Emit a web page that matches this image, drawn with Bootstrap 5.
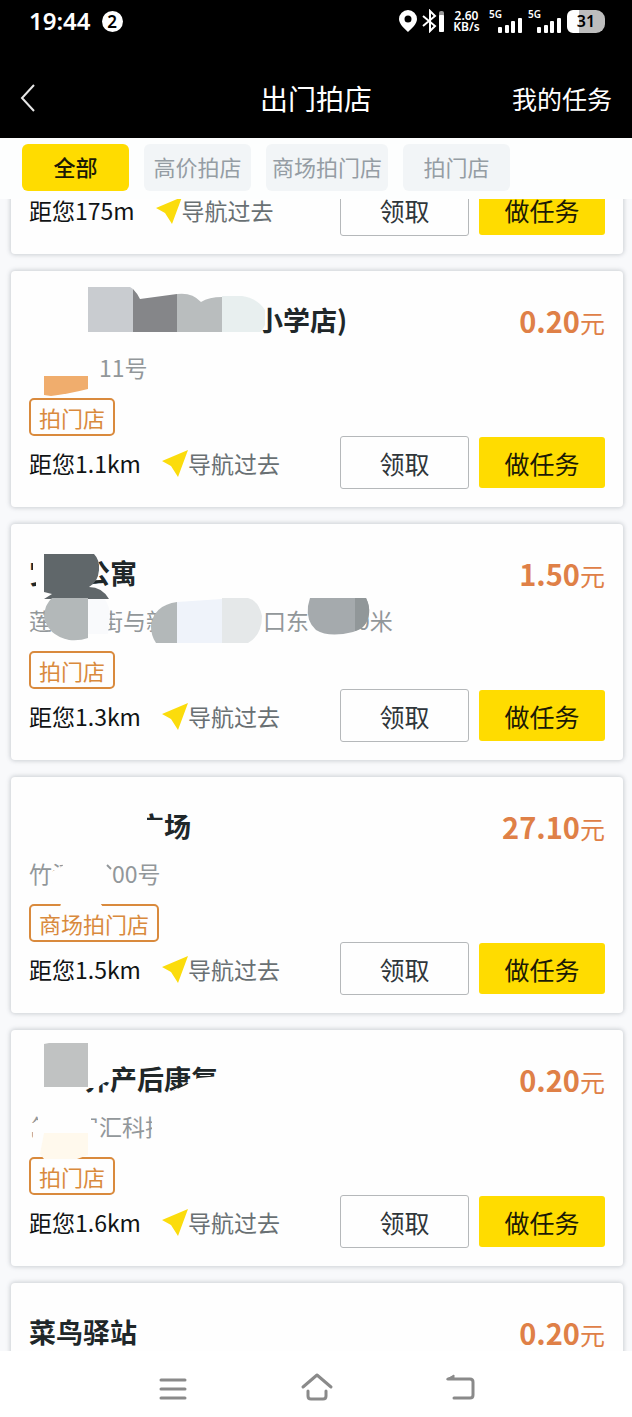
<!DOCTYPE html>
<html lang="zh-CN">
<head>
<meta charset="utf-8">
<meta name="viewport" content="width=device-width, initial-scale=1">
<title>出门拍店</title>
<link href="https://cdn.jsdelivr.net/npm/bootstrap@5.3.0/dist/css/bootstrap.min.css" rel="stylesheet">
<style>
  :root { --sun: #ffdc00; --clay: #df8047; --tag: #d98a3d; }
  body { font-family: "Noto Sans CJK SC", sans-serif; background: #fdfefe; color: #101314; }
  .status { height: 44px; padding: 0 27px 2px 29px; font-family: "Noto Sans", "Noto Sans CJK SC", sans-serif; font-weight: 600; }
  .clock { font-size: 24px; line-height: 32px; }
  .count { width: 21px; height: 21px; font-size: 17px; line-height: 21px; margin-left: 11px; }
  .speed { font-size: 12px; line-height: 11px; margin: 0 8px; width: 29px; }
  .signal { font-size: 10px; line-height: 10px; width: 33px; height: 24px; margin-right: 6px; }
  .battery { width: 38px; height: 23px; font-size: 16px; line-height: 23px; border-radius: 6px 9px 9px 6px; background: linear-gradient(90deg, #fff 31%, #bdbdbd 31%); }
  .titlebar { display: grid; grid-template-columns: 1fr auto 1fr; padding: 33px 20px 19px; line-height: 42px; }
  .titlebar h1 { font-size: 28px; line-height: 42px; font-weight: 400; }
  .titlebar a { font-size: 25px; }
  .tabs { padding: 6px 22px 8px; gap: 15px; }
  .tab { min-width: 107px; height: 47px; padding: 0 6px 3px; border: 0; border-radius: 6px; font-size: 22px; line-height: 42px; background: #f2f5f7; color: #959da4; }
  .tab.on { background: var(--sun); color: #1c1a05; font-weight: 500; }
  .feed { background: #f8f9fb; padding: 0 9px 0 11px; min-height: 0; }
  .job { border: 0; border-radius: 4px; background: #fefefe; box-shadow: 0 0 4px 1px rgba(90,100,110,.28); padding: 32px 18px 18px; margin-bottom: 17px; }
  .job.cut { margin-top: -48px; }
  .head { height: 34px; }
  .shop { font-size: 27px; line-height: 34px; font-weight: 700; color: #202729; }
  .price { font-size: 29px; line-height: 34px; font-weight: 700; color: var(--clay); }
  .price small { font-size: 25px; font-weight: 400; }
  .addr { font-size: 23px; line-height: 32px; height: 32px; margin: 14px 0 15px; color: #92979a; }
  .kind { font-size: 22px; line-height: 34px; height: 38px; padding: 0 8px; border: 2px solid var(--tag); border-radius: 5px; color: var(--tag); }
  .far { font-size: 23px; line-height: 24px; }
  .go { font-size: 23px; line-height: 24px; color: #697073; margin-left: 21px; }
  .act { font-size: 25px; line-height: 24px; border-radius: 3px; padding: 0; }
  .take { width: 129px; height: 53px; border: 1px solid #b5b8ba; background: #fefefe; color: #30363a; margin-right: 10px; }
  .do { width: 126px; height: 51px; border: 0; background: var(--sun); color: #1c1a05; }
  .gap-1c { width: 24px; } .gap-2c { width: 48px; } .gap-4c { width: 94px; } .gap-no { width: 37px; } .gap-yard { width: 70px; }
  .gap-1t { width: 27px; } .gap-2t { width: 54px; } .gap-4t { width: 108px; } .gap-8t { width: 227px; }
  .blur { pointer-events: none; }
  .keys { height: 66px; padding: 10px 0 0; gap: 102px; background: #fff; }
  .keys button { width: 42px; height: 42px; }
</style>
</head>
<body>
<svg width="0" height="0" class="position-absolute" aria-hidden="true">
  <symbol id="arrow" viewBox="0 0 26 28"><path d="M0 12 26 1 16 28 9 17Z" fill="#fbdc0c"/></symbol>
  <symbol id="bars" viewBox="0 0 25 16"><g fill="#fff"><rect x="1" y="10" width="4" height="6" rx="1"/><rect x="8" y="8" width="4" height="8" rx="1"/><rect x="14" y="4" width="4" height="12" rx="1"/><rect x="21" y="1" width="4" height="15" rx="1"/></g></symbol>
</svg>
<div class="d-flex flex-column vh-100 overflow-hidden">
  <header class="bg-black text-white flex-shrink-0">
    <div class="status d-flex align-items-center">
      <span class="clock">19:44</span>
      <span class="count rounded-circle bg-white text-black text-center">2</span>
      <div class="d-flex align-items-center ms-auto">
        <svg width="46" height="24" viewBox="0 0 46 24" aria-hidden="true"><path fill="#fff" fill-rule="evenodd" d="M10 1a9 9 0 0 1 9 9c0 5-5 9-9 13-4-4-9-8-9-13a9 9 0 0 1 9-9Zm0 5.500a3.500 3.500 0 1 0 0 7 3.500 3.500 0 0 0 0-7Z"/><path d="m25 7 12 10-5 5V2l5 5-12 10" fill="none" stroke="#fff" stroke-width="2"/><rect x="41" y="2" width="5" height="21" rx="2" fill="#999"/><rect x="41" y="6" width="5" height="17" rx="1" fill="#fff"/></svg>
        <span class="speed text-center">2.60 KB/s</span>
        <span class="signal position-relative">5G<svg class="position-absolute bottom-0 end-0" width="25" height="16"><use href="#bars"/></svg></span>
        <span class="signal position-relative">5G<svg class="position-absolute bottom-0 end-0" width="25" height="16"><use href="#bars"/></svg></span>
        <span class="battery text-black text-center">31</span>
      </div>
    </div>
    <nav class="titlebar align-items-center">
      <button class="btn p-0 border-0 text-start lh-1" aria-label="返回"><svg width="16" height="28" viewBox="0 0 16 28" fill="none" stroke="#e6e6e6" stroke-width="2"><path d="M14 1 2 14l12 13"/></svg></button>
      <h1 class="m-0">出门拍店</h1>
      <a href="#" class="text-white text-decoration-none text-end">我的任务</a>
    </nav>
  </header>

  <div class="tabs d-flex flex-shrink-0">
    <button class="tab on">全部</button>
    <button class="tab">高价拍店</button>
    <button class="tab">商场拍门店</button>
    <button class="tab">拍门店</button>
  </div>

  <main class="feed flex-grow-1 overflow-hidden">
    <article class="job cut">
      <div class="d-flex align-items-center">
        <span class="far">距您175m</span>
        <a href="#" class="go d-flex align-items-center text-decoration-none"><svg width="26" height="28"><use href="#arrow"/></svg>导航过去</a>
        <button class="act take ms-auto">领取</button><button class="act do">做任务</button>
      </div>
    </article>

    <article class="job position-relative">
      <div class="head d-flex justify-content-between"><h2 class="shop m-0 d-flex"><span class="gap-8t"></span>小学店)</h2><span class="price">0.20<small>元</small></span></div>
      <p class="addr d-flex"><span class="gap-yard"></span>11号</p>
      <span class="kind d-table">拍门店</span>
      <div class="d-flex align-items-center">
        <span class="far">距您1.1km</span>
        <a href="#" class="go d-flex align-items-center text-decoration-none"><svg width="26" height="28"><use href="#arrow"/></svg>导航过去</a>
        <button class="act take ms-auto">领取</button><button class="act do">做任务</button>
      </div>
      <svg class="blur position-absolute top-0 start-0" width="400" height="236" viewBox="11 271 400 236" aria-hidden="true">
        <path d="M88 287h42l3 2v43H88Z" fill="#c9ccd0"/><path d="M133 289q4 4 7 10l37-5v38h-44Z" fill="#858689"/><path d="M177 294q15-2 24 8 8-5 21-5v35h-45Z" fill="#b9bdbe"/><path d="M222 296h20q15 2 23 14v15l-4 7h-39Z" fill="#e8efef"/>
        <path d="M44 376h44v13q-20 5-37 7l-7-1Z" fill="#f0ad6d"/>
      </svg>
    </article>

    <article class="job position-relative">
      <div class="head d-flex justify-content-between"><h2 class="shop m-0 d-flex">安<span class="gap-1t"></span>公寓</h2><span class="price">1.50<small>元</small></span></div>
      <p class="addr d-flex">莲<span class="gap-2c"></span>街与新<span class="gap-4c"></span>口东<span class="gap-2c"></span>0米</p>
      <span class="kind d-table">拍门店</span>
      <div class="d-flex align-items-center">
        <span class="far">距您1.3km</span>
        <a href="#" class="go d-flex align-items-center text-decoration-none"><svg width="26" height="28"><use href="#arrow"/></svg>导航过去</a>
        <button class="act take ms-auto">领取</button><button class="act do">做任务</button>
      </div>
      <svg class="blur position-absolute top-0 start-0" width="400" height="236" viewBox="11 524 400 236" aria-hidden="true">
        <path d="M33 555h15v42H36V582h-3ZM28 571h8v10h-8Z" fill="#fefefe"/><path d="M88 598h16q6 8 6 18l-2 18H88Z" fill="#f9fafc"/>
        <path d="M44 554h50q6 6 5 16-1 12-10 17 13 0 20 12H44l8-5-8-2Z" fill="#60676a"/>
        <path d="M52 598h36v40q-8 3-19 2-22-5-25-24 1-12 8-18Z" fill="#b3b8b9"/>
        <path d="M177 602v41h-21q-5-7-5-17 3-21 26-24Z" fill="#b3b8b9"/><path d="M177 602l45-3v44h-45Z" fill="#eff3fa"/><path d="M222 598h26q11 3 14 18 0 19-14 27h-26Z" fill="#e5e8e9"/>
        <path d="M310 598h56q4 8 3 16-2 14-16 18-24 6-37-2-10-9-8-24Z" fill="#a5aaad"/><path d="M355 598h11q4 8 3 16-2 14-14 17Z" fill="#919799"/>
      </svg>
    </article>

    <article class="job position-relative">
      <div class="head d-flex justify-content-between"><h2 class="shop m-0 d-flex"><span class="gap-4t"></span>广场</h2><span class="price">27.10<small>元</small></span></div>
      <p class="addr d-flex">竹溪<span class="gap-no"></span>00号</p>
      <span class="kind d-table">商场拍门店</span>
      <div class="d-flex align-items-center">
        <span class="far">距您1.5km</span>
        <a href="#" class="go d-flex align-items-center text-decoration-none"><svg width="26" height="28"><use href="#arrow"/></svg>导航过去</a>
        <button class="act take ms-auto">领取</button><button class="act do">做任务</button>
      </div>
      <svg class="blur position-absolute top-0 start-0" width="400" height="236" viewBox="11 777 400 236" aria-hidden="true">
        <path d="M134 806h13v14h17v22h-30Z" fill="#fefefe"/><path d="M53 871l10-5-1-3h14v28H53ZM62 900h36l5 7H60Z" fill="#fefefe"/>
        <path d="m107 865 4 4" stroke="#92979a" stroke-width="2"/>
      </svg>
    </article>

    <article class="job position-relative">
      <div class="head d-flex justify-content-between"><h2 class="shop m-0 d-flex"><span class="gap-2t"></span>界产后康复</h2><span class="price">0.20<small>元</small></span></div>
      <p class="addr d-flex">创<span class="gap-1c"></span>智汇科技</p>
      <span class="kind d-table">拍门店</span>
      <div class="d-flex align-items-center">
        <span class="far">距您1.6km</span>
        <a href="#" class="go d-flex align-items-center text-decoration-none"><svg width="26" height="28"><use href="#arrow"/></svg>导航过去</a>
        <button class="act take ms-auto">领取</button><button class="act do">做任务</button>
      </div>
      <svg class="blur position-absolute top-0 start-0" width="400" height="236" viewBox="11 1030 400 236" aria-hidden="true">
        <path d="M78 1060h32v20l-8 4-5 4H78Z" fill="#fefefe"/><path d="M166 1094l20-9 12-7 22-2v22h-54Z" fill="#fefefe"/>
        <path d="M44 1044l5-1h39v44H44Z" fill="#c0c2c2"/>
        <path d="M38 1112h53v11h7v17H33v-8h-5v-9h5l5-3ZM152 1110h19v30h-19Z" fill="#fefefe"/><path d="M44 1133h44v22l-11 4H44l-4-5Z" fill="#fff9ed"/>
      </svg>
    </article>

    <article class="job">
      <div class="head d-flex justify-content-between"><h2 class="shop m-0">菜鸟驿站</h2><span class="price">0.20<small>元</small></span></div>
    </article>
  </main>

  <nav class="keys d-flex justify-content-center align-items-center flex-shrink-0">
    <button class="btn p-0 border-0" aria-label="最近任务"><svg width="42" height="42" viewBox="0 0 42 42" fill="none" stroke="#8a8a8a" stroke-width="3" stroke-linecap="round"><path d="M10 12h24M10 21h24M10 30h24"/></svg></button>
    <button class="btn p-0 border-0" aria-label="主页"><svg width="42" height="42" viewBox="0 0 42 42" fill="none" stroke="#8a8a8a" stroke-width="3" stroke-linecap="round" stroke-linejoin="round"><path d="M8 19 22 7l14 12M13 23v5q0 3 3 3h12q3 0 3-3v-5"/></svg></button>
    <button class="btn p-0 border-0" aria-label="后退"><svg width="42" height="42" viewBox="0 0 42 42" fill="none" stroke="#8a8a8a" stroke-width="3" stroke-linecap="round" stroke-linejoin="round"><path d="M9 11h22q3 0 3 3v13q0 3-3 3H15"/><path d="M8 11l7-4v4Z" fill="#8a8a8a" stroke-width="1"/></svg></button>
  </nav>
</div>
<script src="https://cdn.jsdelivr.net/npm/bootstrap@5.3.0/dist/js/bootstrap.bundle.min.js"></script>
</body>
</html>
